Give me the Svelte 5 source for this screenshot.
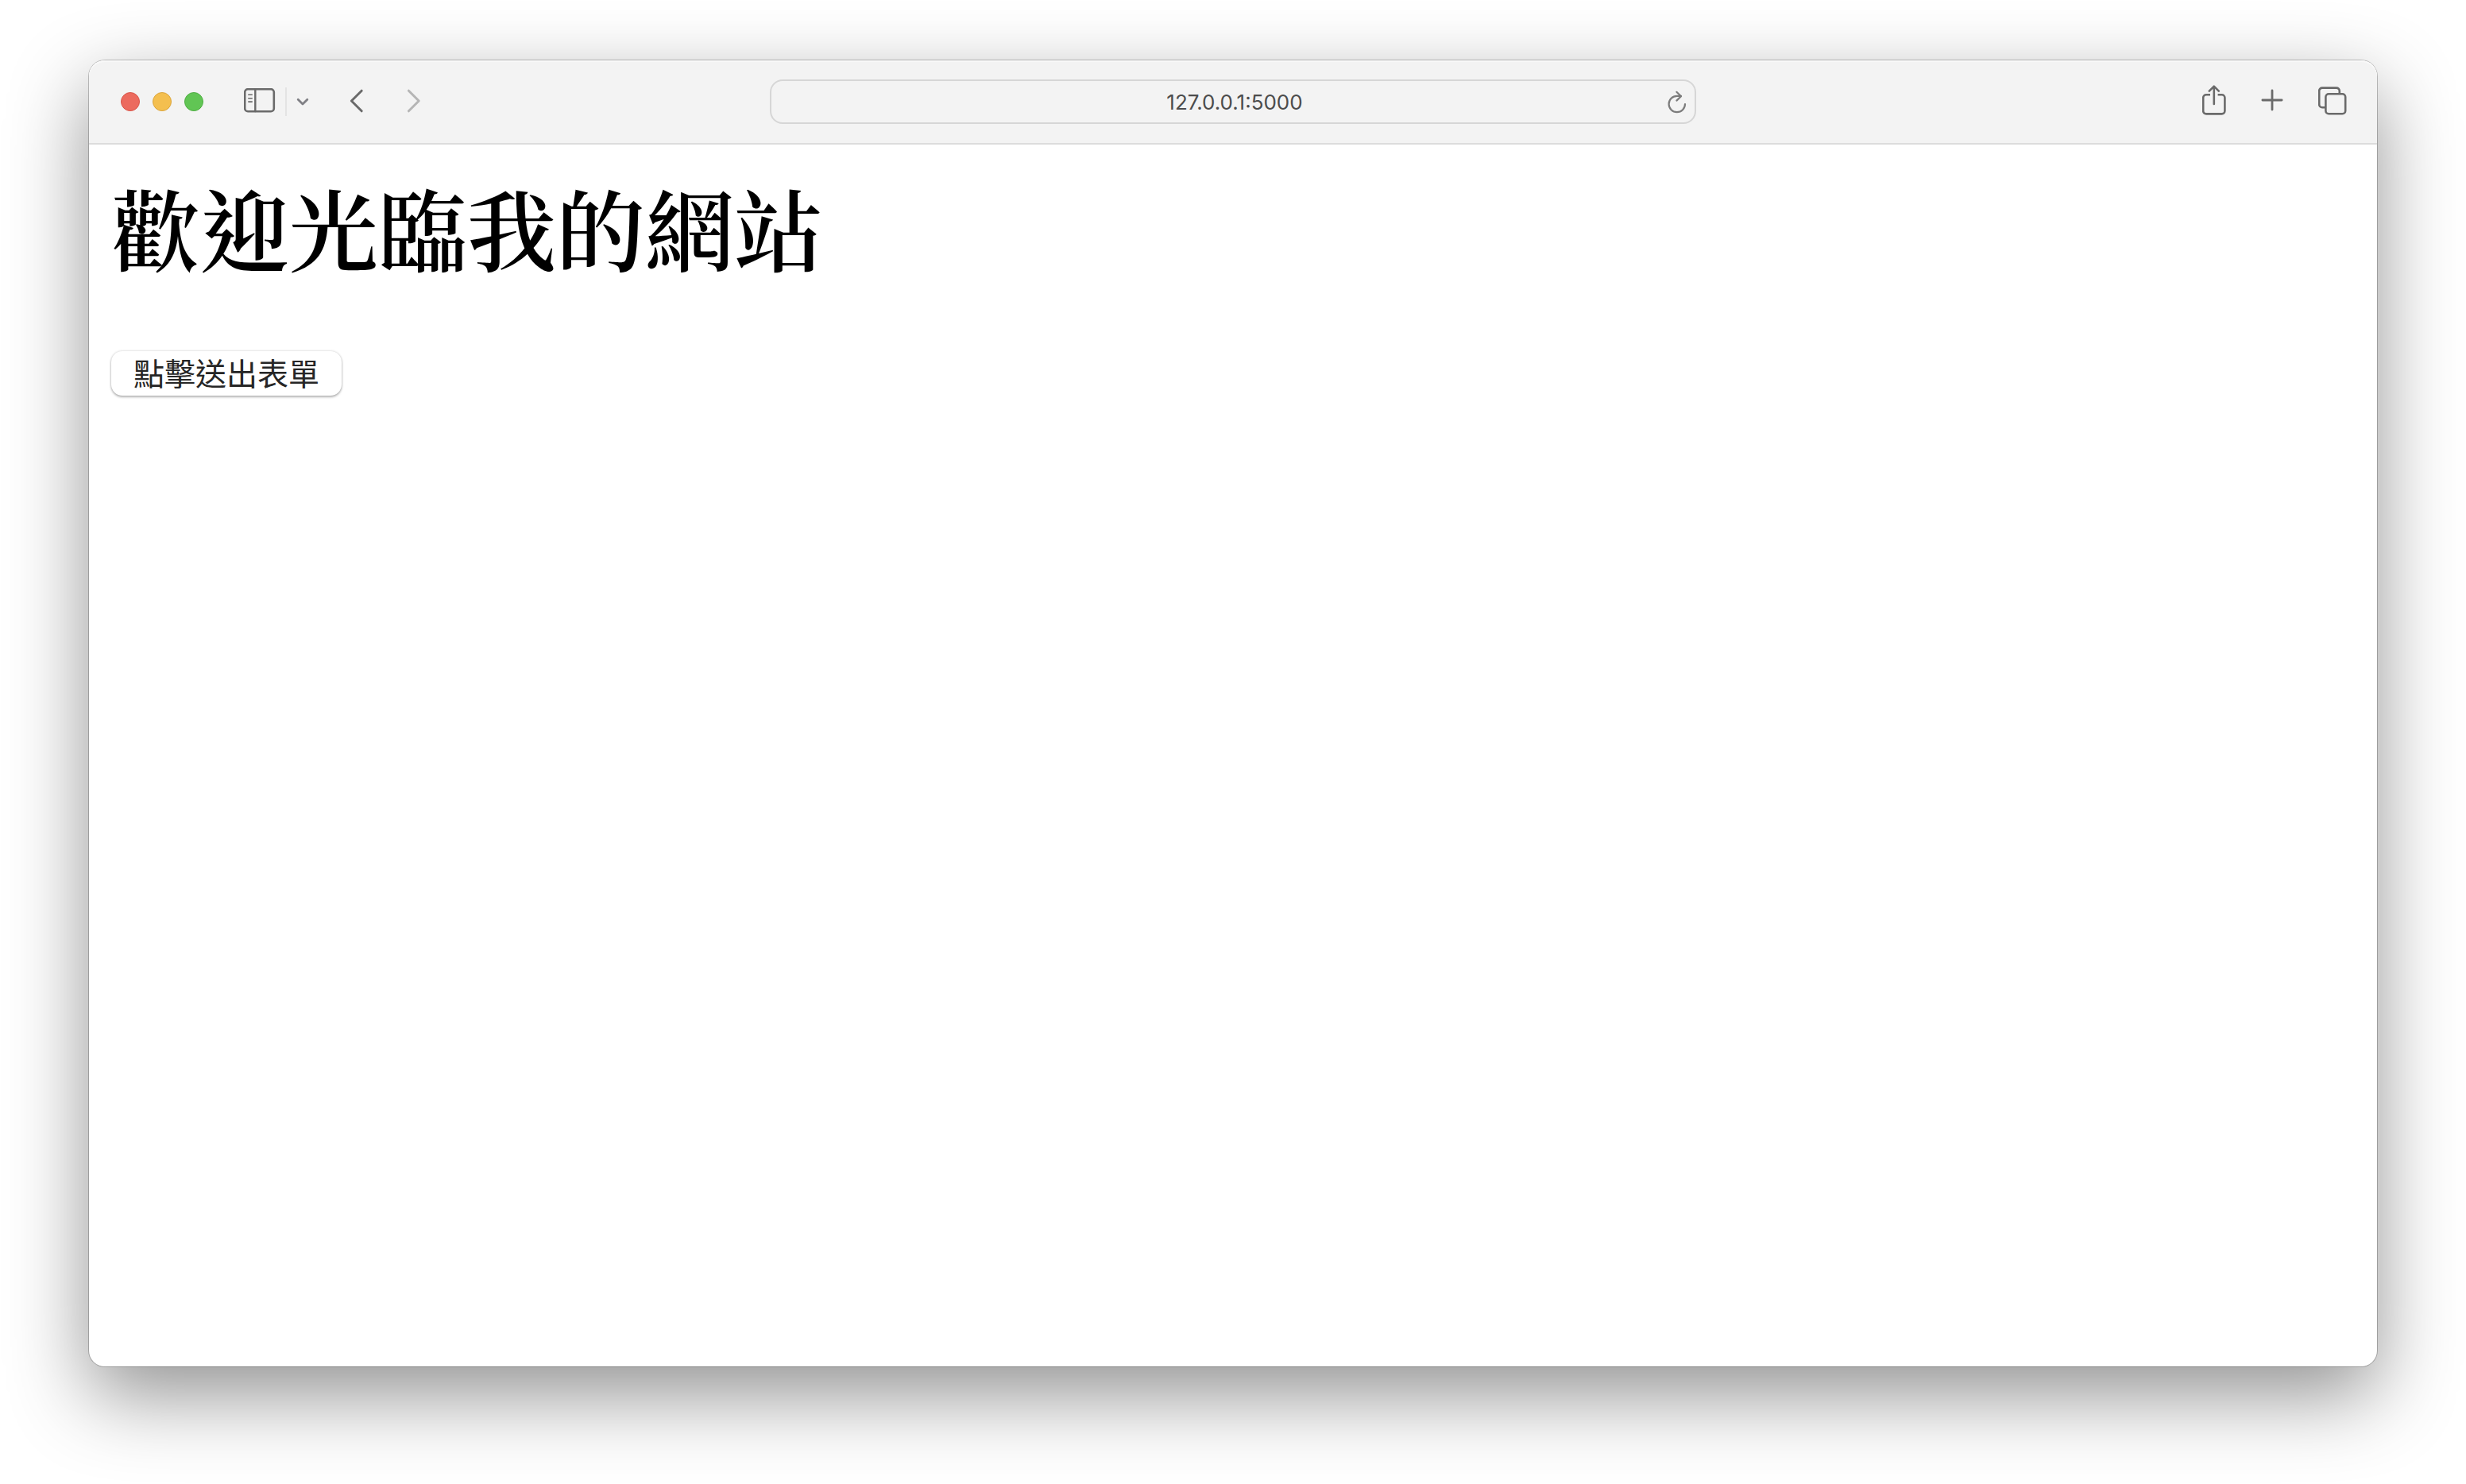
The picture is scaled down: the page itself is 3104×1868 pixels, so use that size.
<script>
  let address = $state('127.0.0.1:5000');
</script>

<div class="desktop">
  <div class="window">
    <header class="toolbar">
      <div class="group start">
        <div class="lights">
          <button class="light close" aria-label="Close"></button>
          <button class="light minimize" aria-label="Minimize"></button>
          <button class="light expand" aria-label="Full screen"></button>
        </div>
        <div class="sidebar">
          <button class="tool" aria-label="Show sidebar">
            <svg width="40" height="32" viewBox="0 0 40 32">
              <rect x="1.2" y="1.2" width="36.6" height="28" rx="3.8" stroke-width="2.6" />
              <path d="M14.3 1v28" stroke-width="2.4" />
              <path d="M5.8 8.3h4.4M5.8 12.7h4.4M5.8 17.1h4.4" stroke-width="1.6" />
            </svg>
          </button>
          <span class="divider"></span>
          <button class="tool muted" aria-label="Tab groups">
            <svg width="16" height="12" viewBox="0 0 16 12">
              <path d="M2.2 3.2L8 9l5.8-5.8" stroke-width="2.8" />
            </svg>
          </button>
        </div>
        <div class="history">
          <button class="tool" aria-label="Back">
            <svg width="18" height="32" viewBox="0 0 18 32">
              <path d="M15.2 3.2L2.4 16l12.8 12.8" stroke-width="3" />
            </svg>
          </button>
          <button class="tool faded" aria-label="Forward">
            <svg width="18" height="32" viewBox="0 0 18 32">
              <path d="M2.4 3.2L15.2 16L2.4 28.8" stroke-width="3" />
            </svg>
          </button>
        </div>
      </div>

      <div class="address">
        <input type="text" aria-label="Address" bind:value={address} spellcheck="false" />
        <button class="tool reload" aria-label="Reload">
          <svg width="24" height="30" viewBox="0 0 24 30">
            <path d="M22 17A10.2 10.2 0 1 1 11.8 6.8H17" stroke-width="2.2" />
            <path d="M11.4 1.8L17 7.2l-5.6 5.4" stroke-width="2.2" />
          </svg>
        </button>
      </div>

      <div class="group end">
        <button class="tool" aria-label="Share">
          <svg width="30" height="38" viewBox="0 0 30 38">
            <path d="M10 12.2H5a3.8 3.8 0 0 0-3.8 3.8v16.6A3.8 3.8 0 0 0 5 36.4h19.6a3.8 3.8 0 0 0 3.8-3.8V16a3.8 3.8 0 0 0-3.8-3.8h-5" stroke-width="2.6" stroke-linecap="butt" />
            <path d="M14.8 24V2M8.8 7.6l6-6 6 6" stroke-width="2.6" />
          </svg>
        </button>
        <button class="tool" aria-label="New tab">
          <svg width="28" height="38" viewBox="0 0 28 38">
            <path d="M14 6.9v24.2M1.9 19h24.2" stroke-width="2.8" />
          </svg>
        </button>
        <button class="tool" aria-label="Tab overview">
          <svg width="36" height="38" viewBox="0 0 36 38">
            <path d="M8.8 28.2H5a3.8 3.8 0 0 1-3.8-3.8V7.4A3.8 3.8 0 0 1 5 3.6h18a3.8 3.8 0 0 1 3.8 3.8v3.4" stroke-width="2.6" stroke-linecap="butt" />
            <rect x="9.4" y="11.2" width="24.8" height="25" rx="3.8" stroke-width="2.6" />
          </svg>
        </button>
      </div>
    </header>

    <main>
      <h1>歡迎光臨我的網站</h1>
      <form onsubmit={(e) => e.preventDefault()}>
        <button class="submit" type="submit">點擊送出表單</button>
      </form>
    </main>
  </div>
</div>

<style>
  :global(body) {
    margin: 0;
    background: #fff;
  }

  button {
    margin: 0;
    padding: 0;
    border: 0;
    background: none;
  }

  .desktop {
    display: flex;
    box-sizing: border-box;
    min-height: 100vh;
    padding: 76px 112px 148px;
    overflow: hidden;
  }

  .window {
    flex: 1;
    min-width: 0;
    border-radius: 20px;
    background: #fff;
    box-shadow:
      0 0 0 1px rgba(0, 0, 0, 0.22),
      0 36px 100px rgba(0, 0, 0, 0.43);
  }

  .toolbar {
    display: grid;
    grid-template-columns: 857fr 1166fr 857fr;
    align-items: center;
    height: 104px;
    border-bottom: 2px solid #dcdcdc;
    border-radius: 20px 20px 0 0;
    background: #f3f3f3;
    box-shadow: inset 0 2px #f9f9f9;
  }

  .group,
  .lights,
  .sidebar,
  .history {
    display: flex;
    align-items: center;
  }

  .start {
    gap: 51px;
    padding-left: 40px;
  }

  .end {
    justify-content: flex-end;
    gap: 44px;
    padding-right: 38px;
  }

  .lights {
    gap: 16px;
  }

  .light {
    width: 24px;
    height: 24px;
    border: 1px solid;
    border-radius: 50%;
  }

  .close {
    border-color: #d95549;
    background: #ec6a5e;
  }

  .minimize {
    border-color: #dba53c;
    background: #f4bf4f;
  }

  .expand {
    border-color: #4fae43;
    background: #61c554;
  }

  .sidebar {
    gap: 12px;
  }

  .history {
    gap: 54px;
  }

  .divider {
    width: 2px;
    height: 36px;
    background: #e4e4e4;
  }

  .tool {
    display: flex;
    color: #6a6a6a;
  }

  .start .tool {
    padding-bottom: 2px;
  }

  .end .tool {
    padding-bottom: 4px;
  }

  .start .muted {
    padding-bottom: 0;
    color: #808085;
  }

  .start .faded {
    color: #b5b5b5;
  }

  svg {
    fill: none;
    stroke: currentColor;
    stroke-linecap: round;
    stroke-linejoin: round;
  }

  .address {
    display: flex;
    align-items: center;
    box-sizing: border-box;
    height: 56px;
    padding: 2px 10px 0 38px;
    border: 2px solid #d6d6d6;
    border-radius: 16px;
  }

  input {
    flex: 1;
    min-width: 0;
    padding: 0;
    border: 0;
    outline: 0;
    background: none;
    color: #4c4c4c;
    font: 400 26px/32px Inter, sans-serif;
    text-align: center;
  }

  .address .reload {
    color: #7c7c7c;
  }

  main {
    padding: 38px 28px;
  }

  h1 {
    margin: 0 0 90px;
    color: #000;
    font: 600 112px/132px "Songti TC", "Noto Serif CJK TC", "Noto Sans CJK TC", serif;
  }

  .submit {
    padding: 0 28px 4px;
    border-radius: 14px;
    background: #fff;
    box-shadow:
      0 0 3px rgba(0, 0, 0, 0.2),
      0 2px 3px rgba(0, 0, 0, 0.26);
    color: #262626;
    font: 400 39px/52px "Noto Sans CJK TC", sans-serif;
  }
</style>
